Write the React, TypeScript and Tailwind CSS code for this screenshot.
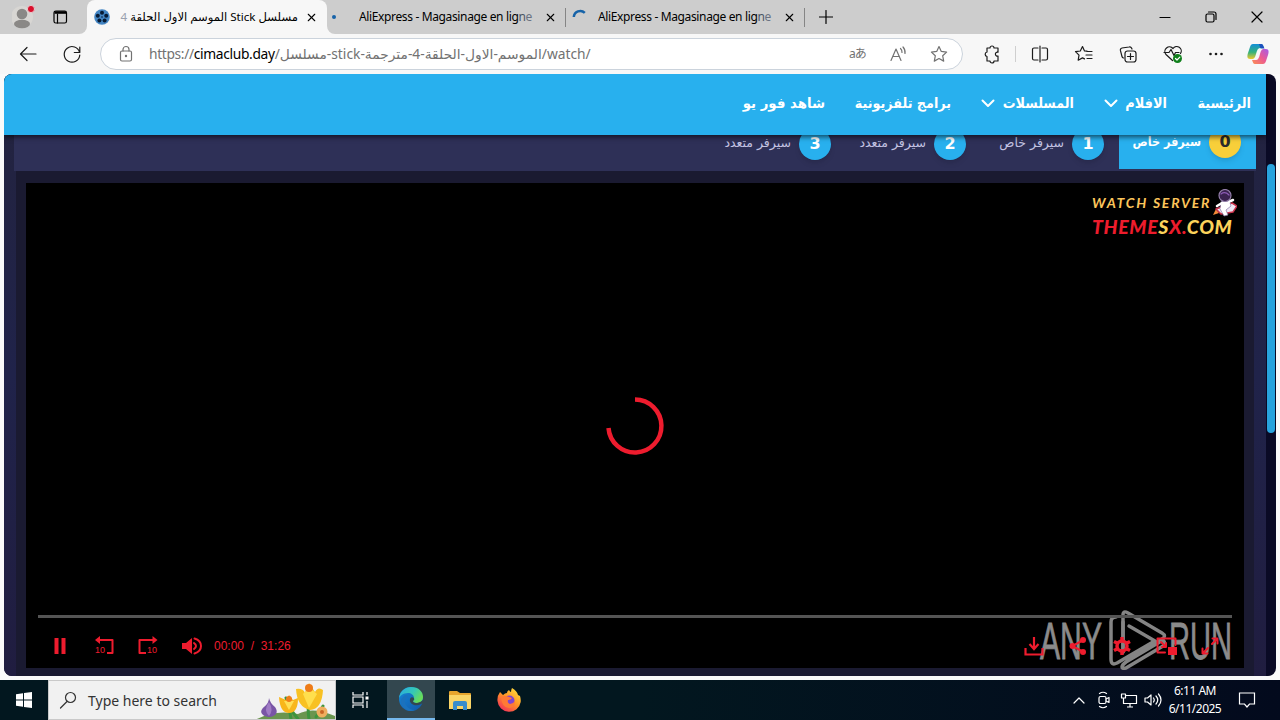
import type { ReactNode } from "react";
import { X } from "lucide-react";

type IconProps = {
  w?: number;
  h?: number;
  children: ReactNode;
  className?: string;
};

const Icon = ({ w = 20, h = 20, children, className = "" }: IconProps) => (
  <svg
    width={w}
    height={h}
    viewBox={`0 0 ${w} ${h}`}
    fill="none"
    stroke="currentColor"
    strokeWidth="1.2"
    strokeLinecap="round"
    strokeLinejoin="round"
    className={`shrink-0 ${className}`}
  >
    {children}
  </svg>
);

const AliTitle = ({ className }: { className: string }) => (
  <div className={`w-[176px] overflow-hidden whitespace-nowrap tracking-[-0.03em] ${className}`}>
    AliExpress - Magasinage en lig<span className="text-gray-600">n</span>
    <span className="text-gray-500">e</span>
  </div>
);

const TabStrip = () => (
  <div className="flex h-[34px] bg-[#f7f7f7] text-[12px] text-black">
    <div className="flex w-[87px] items-center rounded-br-lg bg-[#cdcdcd] pl-3">
      {/* Profile */}
      <Icon w={24} h={26}>
        <circle cx="10" cy="13" r="11" fill="#d8d6d3" stroke="none" />
        <circle cx="10" cy="10" r="5.3" fill="#8a8886" stroke="none" />
        <ellipse cx="10" cy="20" rx="8" ry="4.2" fill="#8a8886" stroke="none" />
        <circle cx="19" cy="5" r="3.6" fill="#d90f2c" stroke="#e8c9cb" strokeWidth="1" />
      </Icon>
      <Icon w={16} h={16} className="ml-4">
        <rect x="2" y="2" width="12.5" height="12" rx="1.8" strokeWidth="1.2" />
        <path d="M2.500 3.500h11.500" strokeWidth="2.600" strokeLinecap="butt" />
        <path d="M5.500 5v9" strokeWidth="1.2" />
      </Icon>
    </div>

    <div className="w-[240px] bg-[#cdcdcd]">
      <div className="flex h-full items-center rounded-t-lg bg-[#f7f7f7] pl-[7px]">
        <Icon w={16} h={16}>
          <circle cx="8" cy="8" r="7.8" fill="#4385c3" stroke="none" />
          <g fill="#071b35" stroke="none">
            <circle cx="8" cy="3.7" r="2" />
            <circle cx="3.8" cy="6.8" r="2" />
            <circle cx="12.2" cy="6.8" r="2" />
            <circle cx="5.4" cy="11.6" r="2" />
            <circle cx="10.6" cy="11.6" r="2" />
            <circle cx="8" cy="8" r=".8" />
          </g>
        </Icon>
        <div dir="rtl" className="ml-[10px] w-[178px] text-[11.6px] whitespace-nowrap">
          مسلسل Stick الموسم الاول الحلقة <span className="text-gray-400">4</span>
        </div>
        <X size={13} strokeWidth={2} className="ml-[7px]" />
      </div>
    </div>

    <div className="flex flex-1 items-center rounded-bl-lg bg-[#cdcdcd]">
      <div className="flex h-full w-[239px] items-center">
        <span className="ml-[5px] size-[4px] rounded-full bg-[#1663a8]" />
        <AliTitle className="ml-[23px]" />
        <X size={13} strokeWidth={2} className="ml-[9px]" />
        <span className="ml-[8px] h-[19px] w-px bg-[#858585]" />
      </div>
      <div className="flex h-full w-[239px] items-center">
        <Icon w={16} h={16} className="ml-[6px]">
          <path d="M1.8 8A6.500 6.500 0 0 1 12.800 3.800" stroke="#1663a8" strokeWidth="2.500" strokeLinecap="butt" />
        </Icon>
        <AliTitle className="ml-[10px]" />
        <X size={13} strokeWidth={2} className="ml-[9px]" />
        <span className="ml-[8px] h-[19px] w-px bg-[#858585]" />
      </div>
      <Icon w={14} h={14} className="ml-[14px]">
        <path d="M7 .5v13M.5 7h13" />
      </Icon>
      <div className="ml-auto flex items-center gap-[34px] pr-[17px]">
        <Icon w={12} h={12}>
          <path d="M1 6.5h10" />
        </Icon>
        <Icon w={12} h={12}>
          <rect x="1" y="3" width="8" height="8" rx="1.5" />
          <path d="M3.5 1H9a2 2 0 0 1 2 2v5.500" />
        </Icon>
        <Icon w={12} h={12}>
          <path d="M1 1l10 10M11 1L1 11" />
        </Icon>
      </div>
    </div>
  </div>
);

const starPath =
  "M10 2.500l2.300 4.900 5.300.7-3.900 3.700 1 5.300-4.700-2.600-4.700 2.600 1-5.300-3.900-3.700 5.300-.7z";

const Toolbar = () => (
  <div className="flex h-10 items-center bg-[#f7f7f7] pl-[18px] text-[#1b1b1b]">
    <Icon>
      <path d="M18 10H2.500M9 3.500L2.500 10 9 16.500" />
    </Icon>
    <Icon className="ml-6">
      <path d="M17.600 8.500A7.800 7.800 0 1 0 17.800 11M17.800 3v5.500h-5.500" />
    </Icon>
    <div className="ml-[18px] flex h-8 w-[863px] shrink-0 items-center rounded-full border border-[#cbd3dc] bg-white pl-[17px] text-[#727272]">
      <Icon w={16} h={18}>
        <rect x="2.500" y="6" width="11" height="10" rx="1.500" />
        <path d="M5 6V4.500a3 3 0 0 1 6 0V6" />
        <circle cx="8" cy="11" r=".6" fill="currentColor" />
      </Icon>
      <div className="ml-[15px] w-[690px] text-[13.8px] whitespace-nowrap">
        <span className="tracking-[-0.025em]">
          https://<span className="text-black">cimaclub.day</span>
        </span>
        /مسلسل-stick-الموسم-الاول-الحلقة-4-مترجمة/watch/
      </div>
      <div className="ml-[10px] w-5 text-[12px] tracking-[-1px] whitespace-nowrap">aあ</div>
      <Icon className="ml-[20px]">
        <path d="M2 16.500L7 5l5 11.500M4 12.500h6.500M11.500 4.500a5 5 0 0 1 1.500 4M14 3a8 8 0 0 1 2 6.500" />
      </Icon>
      <Icon className="ml-5">
        <path d={starPath} />
      </Icon>
    </div>
    <Icon className="ml-[19px]">
      <path d="M5 4h3a2 2 0 0 1 4 0h4v4.200a2 2 0 1 0 0 3.800v5h-4a2 2 0 0 1-4 0H5v-4.500a2.300 2.300 0 0 1 0-4.500z" />
    </Icon>
    <span className="ml-[13px] h-4 w-px bg-[#cfcfcf]" />
    <Icon className="ml-[14px]">
      <path d="M8 4H4a1.500 1.500 0 0 0-1.500 1.500v9A1.500 1.500 0 0 0 4 16h4M12 4h4a1.500 1.500 0 0 1 1.500 1.500v9A1.500 1.500 0 0 1 16 16h-4M10 2v16" />
    </Icon>
    <Icon className="ml-6">
      <path d="M13 7.200l-2.500-.3L8.500 2.500 6.300 7 1.500 7.700 5 11.200l-.8 5 4.300-2.300 2 1M13 7.500h5M12 11h6M13 14.500h5" />
    </Icon>
    <Icon className="ml-6">
      <rect x="7" y="7" width="11" height="11" rx="2.500" />
      <path d="M12.500 9.500v6M9.500 12.500h6M14 5l-.5-1a2 2 0 0 0-2.500-1L4 4a2 2 0 0 0-1.600 2.400L4 12.500a2 2 0 0 0 1.500 1.500" />
    </Icon>
    <Icon className="ml-[25px]">
      <path d="M9.500 16.500L3 10.500A4.300 4.300 0 0 1 10 4.500a4.300 4.300 0 0 1 7.500 5M1 8.500h5l2-3 3 6 1.500-3H16" />
      <circle cx="14.500" cy="14.500" r="4.500" fill="#10801c" stroke="none" />
      <path d="M12.500 14.500l1.500 1.500 2.800-2.800" stroke="#fff" />
    </Icon>
    <Icon className="ml-[23px]">
      <g fill="currentColor" stroke="none">
        <circle cx="4.500" cy="10" r="1.300" />
        <circle cx="10" cy="10" r="1.300" />
        <circle cx="15.500" cy="10" r="1.300" />
      </g>
    </Icon>
    <Icon w={24} h={24} className="ml-5">
      <defs>
        <linearGradient id="cpA" x1="0" y1="0" x2="0" y2="1">
          <stop offset="0" stopColor="#138fd8" />
          <stop offset=".55" stopColor="#35b27b" />
          <stop offset="1" stopColor="#f0c92c" />
        </linearGradient>
        <linearGradient id="cpB" x1="1" y1="0" x2="0" y2="1">
          <stop offset="0" stopColor="#a45bea" />
          <stop offset=".5" stopColor="#ec5a92" />
          <stop offset="1" stopColor="#fb9152" />
        </linearGradient>
      </defs>
      <path d="M7 2h8c2 0 2 2 3 4h-4c-2 0-3 2-4 6s-2 5-4 5H4c-3 0-3-3-2-6l2-6c.6-2 1.500-3 3-3z" fill="url(#cpA)" stroke="none" />
      <path d="M13 2h2.500c1.700 0 2 2.500 3 4.500h-4z" fill="#1b51bd" stroke="none" />
      <path d="M17 22H9c-2 0-2-2-3-4h4c2 0 3-2 4-6s2-5 4-5h2c3 0 3 3 2 6l-2 6c-.6 2-1.500 3-3 3z" fill="url(#cpB)" stroke="none" />
    </Icon>
  </div>
);

const Chevron = () => (
  <Icon w={14} h={9}>
    <path d="M1.500 1.500L7 7l5.500-5.500" strokeWidth="2" />
  </Icon>
);

const SiteNav = () => (
  <nav
    dir="rtl"
    className="relative z-10 flex h-[61px] items-center gap-[30px] bg-[#28b0ee] pr-[15px] pb-[3px] text-[14px] font-bold whitespace-nowrap text-white shadow-[0_2px_5px_rgba(0,0,0,0.6)]"
  >
    <div className="w-[54px] origin-right scale-x-[.92]">الرئيسية</div>
    <div className="flex w-[63px] items-center justify-between">
      <span className="w-[42px] origin-right scale-x-[.92]">الافلام</span>
      <Chevron />
    </div>
    <div className="flex w-[93px] items-center justify-between">
      <span className="w-[71px] origin-right scale-x-[.91]">المسلسلات</span>
      <Chevron />
    </div>
    <div className="w-[96px] origin-right scale-x-[.91]">برامج تلفزيونية</div>
    <div className="w-[82px] origin-right scale-x-[.95]">شاهد فور يو</div>
  </nav>
);

const servers = [
  { n: 1, name: "سيرفر خاص", width: "w-[138px]" },
  { n: 2, name: "سيرفر متعدد", width: "w-[135px]" },
  { n: 3, name: "سيرفر متعدد", width: "w-[135px]" },
];

const Servers = () => (
  <div dir="rtl" className="mx-[10px] flex h-9 overflow-hidden bg-[#2e3057] text-[12.5px] leading-[14px] whitespace-nowrap">
    <div className="-mt-[20px] flex h-[54px] w-[137px] items-center gap-2 bg-[#28b0ee] px-[15px] font-bold text-white">
      <span className="flex size-8 shrink-0 items-center justify-center rounded-full bg-[#f8cf3a] text-[16px] text-[#2b2b2b] shadow-md">
        0
      </span>
      <span className="origin-right scale-x-[.9] pb-[1px]">سيرفر خاص</span>
    </div>
    {servers.map((s) => (
      <div key={s.n} className={`-mt-[18px] flex h-[54px] items-center gap-2 px-[15px] text-[#c3c3e2] ${s.width}`}>
        <span className="flex size-8 shrink-0 items-center justify-center rounded-full bg-[#28b0ee] text-[16px] font-bold text-white shadow-md">
          {s.n}
        </span>
        <span className="pb-[2px]">{s.name}</span>
      </div>
    ))}
  </div>
);

const WatchLogo = () => (
  <div className="absolute top-[6px] right-[7px] h-[50px] w-[145px] font-['Lato'] italic">
    <div className="flex items-center">
      <span className="mt-[-2px] w-[120px] text-[14px] font-bold tracking-[1.75px] whitespace-nowrap text-[#fcc55b]">
        WATCH SERVER
      </span>
      <Icon w={25} h={29}>
        <path d="M4 20l-3 6 6-2z" fill="#f58a38" stroke="none" />
        <path d="M4 20L20 14l5 3-4 6-12 2z" fill="#eee7f5" stroke="#c9324b" strokeWidth="1.500" />
        <path d="M10 11l7-1 2 7-5 4 2 5-4 1-4-7z" fill="#fff" stroke="#8576a5" strokeWidth=".7" />
        <path d="M10 14l-5 3M16 13l5-2" stroke="#fff" strokeWidth="2.500" />
        <circle cx="13" cy="6.500" r="6" fill="#3b2250" stroke="#907ba6" />
        <path d="M9 5q4-3 8 1" stroke="#8c5bb5" />
      </Icon>
    </div>
    <div className="-mt-[2px] origin-left scale-x-[1.08] text-[18px] leading-[22px] font-black tracking-[0.6px] whitespace-nowrap text-[#ed1c2c]">
      THEME<span className="text-[#fcd35b]">S</span>X.<span className="text-[#fcd35b]">COM</span>
    </div>
  </div>
);

const Watermark = () => (
  <svg width="200" height="66" viewBox="0 0 200 66" className="absolute right-[8px] -bottom-[6px]" fill="none">
    <g
      fill="#8b8b8b"
      stroke="#8b8b8b"
      strokeWidth=".8"
      fontFamily="'Liberation Sans Narrow', 'Liberation Sans', sans-serif"
      fontSize="52"
    >
      <text x="4" y="50.500" textLength="62" lengthAdjust="spacingAndGlyphs">
        ANY
      </text>
      <text x="133" y="50.500" textLength="63" lengthAdjust="spacingAndGlyphs">
        RUN
      </text>
    </g>
    <g stroke="#848484" strokeWidth="3.500" strokeLinejoin="round" strokeLinecap="round">
      <path d="M80 9q-5 0-5 5v37q0 7 6 4l36-21" />
      <path d="M87 44V7q0-5 5-2l34 20q5 3 0 6L91 52" />
      <path d="M93 18l26 15M87 44V14" />
      <path d="M127 32L90 54q-4 3-4 5t4 1l37-22q3-3 0-6" />
    </g>
  </svg>
);

const Player = () => (
  <div className="relative flex h-[485px] w-[1218px] flex-col bg-black text-[#ee1c2e]">
    <WatchLogo />
    <Watermark />
    <div className="flex h-[432px] shrink-0 items-end justify-center pb-[157px]">
      <Icon w={64} h={64}>
        <path d="M32 5.500A26.500 26.500 0 1 1 5.500 34" strokeWidth="4.500" strokeLinecap="butt" />
      </Icon>
    </div>
    <div className="relative mx-3 h-[3px] shrink-0 bg-[#545454]" />
    <div className="relative flex h-[50px] items-center pt-[6px] pl-6">
      <Icon>
        <path d="M4.500 2H8.500v16H4.500zM11.500 2h4v16h-4z" fill="currentColor" stroke="none" />
      </Icon>
      <Icon className="ml-6">
        <path d="M5 4h13.500v13H13" strokeWidth="2" strokeLinecap="butt" />
        <path d="M1 4l5-4v8z" fill="currentColor" stroke="none" />
        <text x="1" y="17" fontSize="9" fill="currentColor" stroke="none" fontFamily="Liberation Sans, sans-serif">10</text>
      </Icon>
      <Icon className="ml-6">
        <path d="M15 4H1.500v13H8" strokeWidth="2" strokeLinecap="butt" />
        <path d="M19.500 4l-5-4v8z" fill="currentColor" stroke="none" />
        <text x="9" y="17" fontSize="9" fill="currentColor" stroke="none" fontFamily="Liberation Sans, sans-serif">10</text>
      </Icon>
      <Icon className="ml-6">
        <path d="M0 7h4l6-5v16l-6-5H0z" fill="currentColor" stroke="none" />
        <path d="M12 7q4 3 0 6M12.500 2.500q6.500 2 6.500 7.500t-6.500 7.500" strokeWidth="2" />
      </Icon>
      <div className="ml-3 w-[90px] font-['Liberation_Sans'] text-[12px] whitespace-pre">
        {"00:00  /  31:26"}
      </div>
      <div className="ml-auto flex gap-6 pr-6">
        <Icon>
          <path d="M1.500 12v6.500h17V12M10 1v11M5.500 8l4.500 5 4.500-5" strokeWidth="2.200" strokeLinecap="butt" strokeLinejoin="miter" />
        </Icon>
        <Icon>
          <path d="M14.500 4.500L4.500 10l10 5.500" strokeWidth="2" />
          <circle cx="15" cy="4" r="3" fill="currentColor" stroke="none" />
          <circle cx="4.500" cy="10" r="3" fill="currentColor" stroke="none" />
          <circle cx="15" cy="16" r="3" fill="currentColor" stroke="none" />
        </Icon>
        <Icon>
          <circle cx="10" cy="10" r="5" strokeWidth="3.500" />
          <path d="M10 1v4M10 15v4M2 5.500l4 2M14 12.500l4 2M2 14.500l4-2M14 7.500l4-2" strokeWidth="3.500" strokeLinecap="butt" />
        </Icon>
        <Icon w={22}>
          <path d="M9 16.500H1.500v-14h18V9M5 6l5 5M10 7v4H6" strokeWidth="2" />
          <path d="M12 11h9v8h-9z" fill="currentColor" stroke="none" />
        </Icon>
        <Icon className="-ml-[2px]">
          <path d="M12 8l5-5M8 12l-5 5M12.500 2.500h5v5M7.500 17.500h-5v-5" strokeWidth="2" />
        </Icon>
      </div>
    </div>
  </div>
);

const Page = () => (
  <div className="bg-[#fafafa] px-1 pb-1">
    <div className="flex h-[602px] overflow-hidden rounded-lg bg-[#0a0a25]">
      <main className="w-[1262px] bg-linear-to-b from-[#23233e] via-[#20234a] to-[#201d40] font-['DejaVu_Sans']">
        <SiteNav />
        <Servers />
        <div className="mx-3 flex h-[505px] bg-[#1a1a31] pt-3 pl-[10px]">
          <Player />
        </div>
      </main>
      <div className="flex w-[10px] justify-center pt-[90px]">
        <div className="h-[269px] w-2 rounded-full bg-[#28a3dd]" />
      </div>
    </div>
  </div>
);

const Flowers = () => (
  <Icon w={80} h={38} className="ml-auto">
    <g stroke="none">
      <path d="M0 39q20-11 43-6 15-8 37 2v4z" fill="#6a954f" />
      <path d="M36 38q-2-14-5-21M54 38q-2-12 1-22M61 36l7-11M43 38l-7-9" stroke="#3d943e" strokeWidth="3" />
      <path d="M14 17q1 5 6 9c5 7-2 10-6 10s-12-4-5-10q5-4 5-9z" fill="#7955a6" />
      <path d="M14 21q-6 8 0 14 5-6 0-14z" fill="#a07cc5" />
      <path d="M24 16l7 3 3-5 4 5 5-2q0 15-9 15T24 16z" fill="#f8b61b" />
      <path d="M29 20l5 9 5-9" fill="#ffdf55" />
      <path d="M41 8q7-1 9 4l4-10 6 9q3-6 8-2-1 19-13 20Q42 26 41 8z" fill="#f8c123" />
      <path d="M48 13l6 14 8-14-8-7z" fill="#ffdf4d" />
      <circle cx="54" cy="7" r="4" fill="#ee7c19" />
      <circle cx="34" cy="18" r="3" fill="#ee7c19" />
      <circle cx="67" cy="31" r="5.500" fill="#efae5e" />
      <circle cx="67" cy="31" r="2" fill="#c96524" />
    </g>
  </Icon>
);

const Taskbar = () => (
  <div className="flex h-10 bg-linear-to-r from-[#02171f] from-50% to-[#030a1d] text-white">
    <div className="flex w-12 items-center justify-center">
      <Icon w={16} h={16}>
        <path d="M0 2.300L7 1.300v6.200H0zM8 1.100L16 0v7.500H8zM0 8.500h7v6.200l-7-1zM8 8.500h8V16l-8-1.100z" fill="#fff" stroke="none" />
      </Icon>
    </div>
    <div className="flex w-[288px] items-center border border-[#c9c9c9] bg-[#f1f1f1] pl-[10px] text-[#333]">
      <Icon>
        <circle cx="11.500" cy="7.500" r="5" />
        <path d="M8 11.500L1.500 18" />
      </Icon>
      <span className="ml-[9px] w-[130px] text-[14px] whitespace-nowrap">Type here to search</span>
      <Flowers />
    </div>
    <div className="flex w-[51px] items-center justify-center pr-[3px]">
      <Icon w={17} h={16}>
        <path d="M1 0v3h10V0M1 16v-3h10v3M1 5h10v6H1zM15 0v3M15 9v7" strokeLinecap="butt" strokeLinejoin="miter" />
        <path d="M13.500 4.500h3v3h-3z" fill="#fff" stroke="none" />
      </Icon>
    </div>
    <div className="flex w-12 items-center justify-center border-b-2 border-[#76b9ed] bg-[#33474f]">
      <Icon w={24} h={24}>
        <defs>
          <linearGradient id="edA" x1="0" y1="0" x2="1" y2=".5">
            <stop offset="0" stopColor="#28a9e8" />
            <stop offset=".6" stopColor="#35c8b5" />
            <stop offset="1" stopColor="#68dc5a" />
          </linearGradient>
          <linearGradient id="edB" x1="0" y1="0" x2="1" y2="1">
            <stop offset="0" stopColor="#1688d8" />
            <stop offset="1" stopColor="#1157a8" />
          </linearGradient>
        </defs>
        <g stroke="none">
          <circle cx="12" cy="12" r="12" fill="url(#edB)" />
          <path d="M0 11C1 4 6 0 12 0c8 0 12 5 12 10 0 4-3 6-6 6s-4-1-4-2 1-1 1-3c0-3-3-5-6-5-5 0-8 3-9 5z" fill="url(#edA)" />
          <path d="M15 11q1 2-1 3 0 2 4 2 3 0 6-3l0 3-2 1q-3 2-7 1-5-2-4-6 1-3 4-1z" fill="#33474f" />
          <path d="M9 9q-5 4-2 9 3 5 9 5-7 3-12-3T5 9q2-2 4 0z" fill="#1b72bd" />
        </g>
      </Icon>
    </div>
    <div className="flex w-[50px] items-center justify-center">
      <Icon w={22} h={20}>
        <g stroke="none">
          <path d="M0 2q0-1 1-1h7l3 2h10q1 0 1 1v14H0z" fill="#e7a52d" />
          <path d="M0 5h22v13q0 1-1 1H0z" fill="#fad567" />
          <path d="M4 20v-7q0-2 2-2h10q2 0 2 2v7h-4v-4H8v4z" fill="#388dcc" />
        </g>
      </Icon>
    </div>
    <div className="flex w-12 items-center justify-center">
      <Icon w={24} h={24}>
        <defs>
          <linearGradient id="fx" x1=".9" y1="0" x2=".2" y2="1">
            <stop offset="0" stopColor="#ffe43d" />
            <stop offset=".5" stopColor="#ff9426" />
            <stop offset="1" stopColor="#f22b5d" />
          </linearGradient>
        </defs>
        <g stroke="none">
          <path d="M3 4l3 3q2-2 4-2 0-2 2-3 1 2 2 2 0-2 1-4 5 3 6 7l2 1q1 3 .7 6A11.700 11.700 0 0 1 .5 13Q0 8 3 4z" fill="url(#fx)" />
          <circle cx="12.500" cy="12.500" r="5" fill="#8045cf" />
          <path d="M4 9q4-2 8 0l3 1q-1 2-4 2-1 3 2 4 3 0 5-3 0 7-6 7-7 0-8-11z" fill="#ff7a35" />
        </g>
      </Icon>
    </div>
    <div className="ml-auto flex items-center pr-6">
      <Icon w={12} h={8}>
        <path d="M1 7l5-5 5 5" />
      </Icon>
      <Icon w={14} h={18} className="ml-3">
        <rect x="2" y="5.500" width="7" height="7" rx="1.500" />
        <path d="M9 8l3-1.500v5L9 10M2.500 2.500q3.500-2.500 7 0M2.500 15.500q3.500 2.500 7 0" />
      </Icon>
      <Icon w={18} h={16} className="ml-[9px]">
        <path d="M6 3.500h10.500v8H3.500V8M10 12v3M7 15h6M1.500 2h4v4h-4zM3.500 6v2" strokeLinecap="butt" />
      </Icon>
      <Icon w={18} h={16} className="ml-[6px]">
        <path d="M1 6h2.500L7 3v10l-3.500-3H1zM9.500 6q1.500 2 0 4M12 4q3.500 4 0 8M14.500 2q5 6 0 12" />
      </Icon>
      <div className="ml-[6px] w-[54px] text-center text-[12px] leading-[18px] tracking-[-0.5px] whitespace-nowrap">
        <div>6:11 AM</div>
        <div>6/11/2025</div>
      </div>
      <Icon w={18} h={18} className="ml-4">
        <path d="M1.500 2h15v11h-5L9 16l-2.500-3h-5z" strokeLinejoin="miter" />
      </Icon>
    </div>
  </div>
);

export default function App() {
  return (
    <div className="h-[720px] w-[1280px] overflow-hidden bg-[#fafafa] font-['Noto_Sans','DejaVu_Sans','Noto_Sans_CJK_JP',sans-serif]">
      <TabStrip />
      <Toolbar />
      <Page />
      <Taskbar />
    </div>
  );
}
